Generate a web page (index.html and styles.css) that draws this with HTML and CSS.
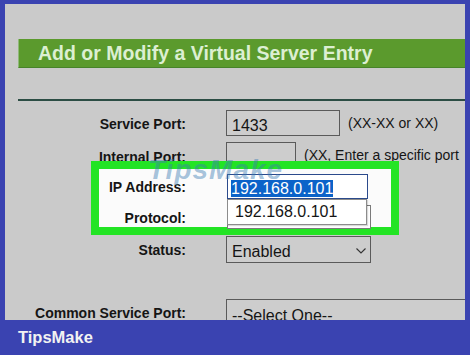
FILE: index.html
```html
<!DOCTYPE html>
<html>
<head>
<meta charset="utf-8">
<link rel="stylesheet" href="styles.css">
</head>
<body>
<div class="frame">
  <div class="panel">
    <div class="title">Add or Modify a Virtual Server Entry</div>
    <div class="rule"></div>
    <div class="row row-service">
      <span class="label">Service Port:</span>
      <div class="field f-service">1433</div>
      <span class="hint">(XX-XX or XX)</span>
    </div>
    <div class="row row-internal">
      <span class="label label-internal">Internal Port:</span>
      <div class="field f-internal"></div>
      <span class="hint">(XX, Enter a specific port</span>
    </div>
    <div class="highlight">
      <div class="row row-ip">
        <span class="label label-in">IP Address:</span>
        <div class="ipwrap">
          <div class="field f-ip"><span class="sel">192.168.0.101</span></div>
          <div class="suggest">192.168.0.101</div>
        </div>
      </div>
      <div class="row row-proto">
        <span class="label label-in label-proto">Protocol:</span>
        <div class="field f-proto"></div>
      </div>
    </div>
    <div class="row row-status">
      <span class="label">Status:</span>
      <div class="field f-status">
        <span>Enabled</span>
        <svg class="chev" width="10" height="6" viewBox="0 0 10 6"><path d="M0.5 0.5 L5 5 L9.5 0.5" fill="none" stroke="#333" stroke-width="1.1"/></svg>
      </div>
    </div>
    <div class="row row-common">
      <span class="label">Common Service Port:</span>
      <div class="field f-common">--Select One--</div>
    </div>
    <div class="watermark">TipsMake</div>
  </div>
</div>
<div class="footer">TipsMake</div>
</body>
</html>
```

FILE: styles.css
```css
* { box-sizing: border-box; }
html, body { margin: 0; padding: 0; }
body {
  width: 470px;
  height: 355px;
  overflow: hidden;
  background: #3a43b1;
  font-family: "Liberation Sans", Arial, sans-serif;
  color: #151515;
}
.frame { padding: 4px 5px 0 5px; }
.panel {
  position: relative;
  height: 316px;
  background: #cacaca;
  overflow: hidden;
}
.title {
  margin: 35px 0 0 13px;
  height: 29px;
  line-height: 28px;
  padding-left: 19px;
  background: #5b9a2d;
  border-bottom: 1px solid #47832a;
  border-left: 1px solid #8fb97a;
  color: #dcefd2;
  font-weight: bold;
  font-size: 19.5px;
}
.rule {
  margin: 31px 0 0 13px;
  height: 2px;
  background: #2c4d44;
}
.row { display: flex; align-items: flex-start; }
.label {
  flex: none;
  width: 181px;
  text-align: right;
  font-weight: bold;
  font-size: 14px;
  line-height: 26px;
  padding-top: 1px;
}
.field {
  flex: none;
  margin-left: 40px;
  border: 1px solid #5a5a5a;
  font-size: 16px;
  padding-left: 5px;
}
.hint {
  margin-left: 8px;
  font-size: 14px;
  line-height: 26px;
  white-space: nowrap;
}
.row-service { margin-top: 9px; height: 26px; }
.f-service {
  width: 114px;
  height: 26px;
  padding-top: 5px;
  line-height: 20px;
  background: #cdcdcd;
}
.row-internal { margin-top: 6px; height: 26px; }
.label-internal { padding-top: 2px; }
.f-internal {
  width: 70px;
  height: 26px;
  background: #cdcdcd;
}
.highlight {
  position: relative;
  z-index: 1;
  margin: -7px 0 0 86px;
  width: 308px;
  height: 74px;
  border: 8px solid #23e424;
  background: #fbfbfb;
  padding-top: 5px;
}
.label-in { width: 87px; line-height: 25px; padding-top: 0.5px; }
.row-ip { height: 25px; }
.ipwrap { position: relative; margin-left: 41px; }
.f-ip {
  margin-left: 0;
  width: 141px;
  height: 25px;
  border: 1px solid #2b4a8c;
  background: #fff;
  padding: 4.5px 0 0 3px;
  line-height: 18px;
}
.sel { background: #0b63c9; color: #fff; }
.suggest {
  position: absolute;
  z-index: 2;
  left: 0;
  top: 25px;
  width: 140px;
  height: 26px;
  background: #fff;
  border: 1px solid #8c8c8c;
  box-shadow: 1px 1px 1px rgba(0,0,0,0.15);
  padding: 2px 0 0 7px;
  font-size: 16px;
  line-height: 20px;
}
.row-proto { margin-top: 6px; height: 22px; }
.label-proto { line-height: 22px; padding-top: 2px; }
.f-proto {
  margin-left: 41px;
  width: 144px;
  height: 24px;
  background: #fff;
  border-color: #7a7a7a;
}
.row-status { margin-top: 1px; height: 27px; }
.f-status {
  width: 145px;
  height: 27px;
  background: #cdcdcd;
  display: flex;
  align-items: flex-start;
  justify-content: space-between;
  padding: 5px 4px 0 5px;
  line-height: 20px;
}
.chev { margin-top: 6px; }
.row-common { margin-top: 36px; height: 27px; }
.f-common {
  flex: 1;
  height: 27px;
  background: #cdcdcd;
  padding-top: 6px;
  line-height: 20px;
  border-right: none;
}
.watermark {
  position: absolute;
  z-index: 1;
  left: 143px;
  top: 150px;
  font-size: 28px;
  font-weight: bold;
  font-style: italic;
  letter-spacing: 1px;
  color: rgba(60, 125, 180, 0.45);
  pointer-events: none;
}
.footer {
  height: 35px;
  padding-left: 18px;
  line-height: 35px;
  color: #f2f2f2;
  font-weight: bold;
  font-size: 16.5px;
}
```
